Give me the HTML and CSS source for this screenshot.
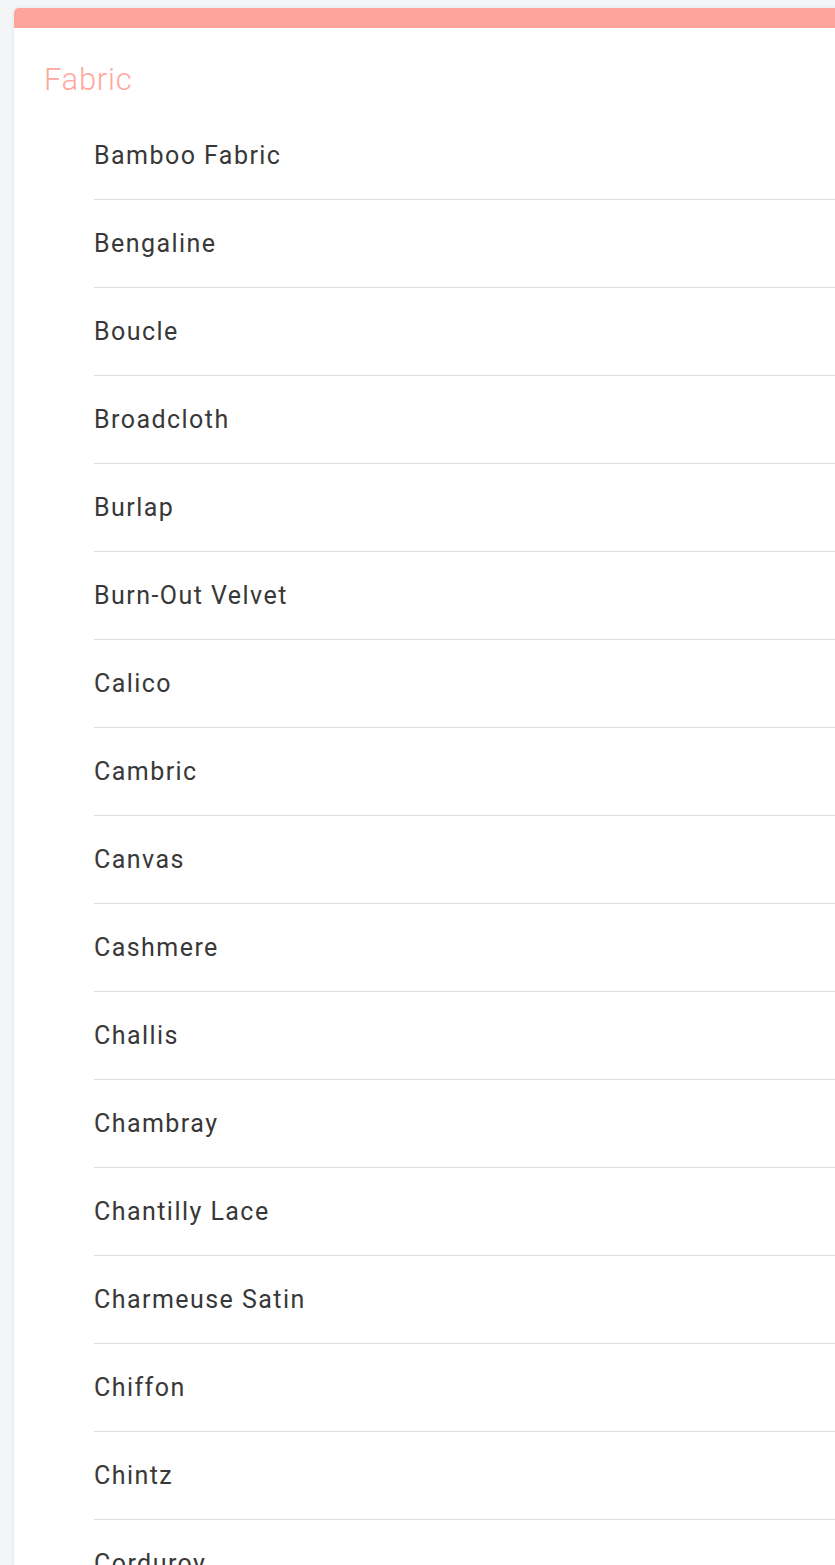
FILE: index.html
```html
<!DOCTYPE html>
<html lang="en">
<head>
  <meta charset="UTF-8">
  <meta name="viewport" content="width=device-width, initial-scale=1.0">
  <title>Fabric</title>
  <link rel="stylesheet" href="styles.css">
</head>
<body>

<div class="card">
  <div class="card-bar"></div>
  <h2 class="card-title">Fabric</h2>
  <ul class="item-list">
    <li>Bamboo Fabric</li>
    <li>Bengaline</li>
    <li>Boucle</li>
    <li>Broadcloth</li>
    <li>Burlap</li>
    <li>Burn-Out Velvet</li>
    <li>Calico</li>
    <li>Cambric</li>
    <li>Canvas</li>
    <li>Cashmere</li>
    <li>Challis</li>
    <li>Chambray</li>
    <li>Chantilly Lace</li>
    <li>Charmeuse Satin</li>
    <li>Chiffon</li>
    <li>Chintz</li>
    <li>Corduroy</li>
  </ul>
</div>

</body>
</html>
```

FILE: styles.css
```css
html {
  overflow: hidden;
}
body {
  font-family: Roboto, "Liberation Sans", sans-serif;
  margin: 0;
  padding: 8px 0 0 14px;
  background-color: #f4f5f7;
}
.card {
  width: 900px;
  background-color: #fff;
  border-radius: 5px 0 0 0;
  box-shadow: 0 0 4px rgba(0, 0, 0, 0.08);
  overflow: hidden;
}
.card-bar {
  height: 20px;
  background-color: #ffa49b;
}
.card-title {
  margin: 0;
  padding: 34px 0 0 30px;
  height: 50px;
  font-size: 31px;
  font-weight: 300;
  letter-spacing: 0.7px;
  color: #ffa8a0;
  line-height: 36px;
}
.item-list {
  list-style: none;
  margin: 0;
  padding: 0 0 0 80px;
}
.item-list li {
  height: 87px;
  line-height: 87px;
  border-bottom: 1px solid #dedede;
  font-size: 25px;
  letter-spacing: 1.45px;
  color: #383838;
}
```
